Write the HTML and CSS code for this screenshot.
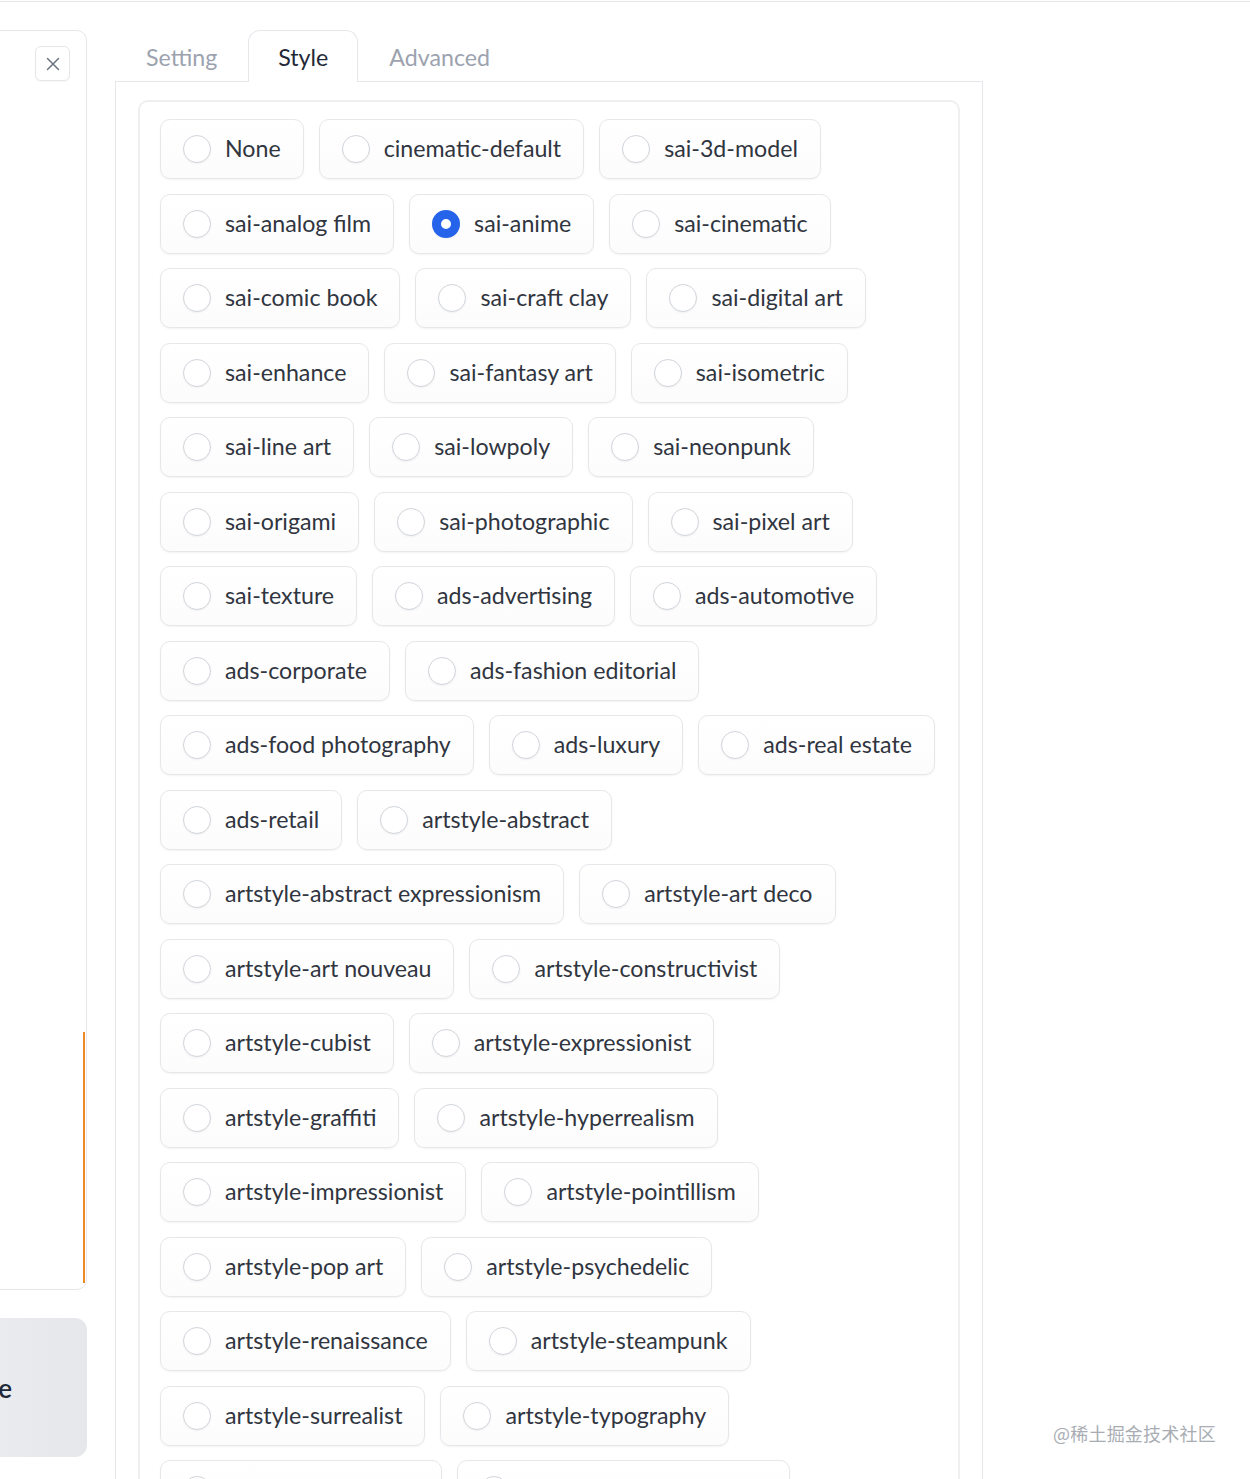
FILE: index.html
```html
<!DOCTYPE html>
<html lang="en">
<head>
<meta charset="utf-8">
<title>Style</title>
<link rel="stylesheet" href="styles.css">
</head>
<body>
<div class="page">
  <div class="left">
    <div class="card">
      <div class="card-head">
        <button class="close" aria-label="close">
          <svg width="14" height="14" viewBox="0 0 14 14"><path d="M1.5 1.5 L12.5 12.5 M12.5 1.5 L1.5 12.5" stroke="#6b7280" stroke-width="1.5" fill="none" stroke-linecap="round"/></svg>
        </button>
      </div>
      <div class="card-fill"></div>
      <div class="card-edge"></div>
    </div>
    <button class="gen">Generate</button>
  </div>

  <div class="tabs">
    <div class="tab-nav">
      <button class="tab">Setting</button>
      <button class="tab selected">Style</button>
      <button class="tab">Advanced</button>
    </div>
    <div class="tab-panel">
      <div class="box">
        <div class="row">
          <label class="item"><span class="radio"></span><span class="txt">None</span></label>
          <label class="item"><span class="radio"></span><span class="txt">cinematic-default</span></label>
          <label class="item"><span class="radio"></span><span class="txt">sai-3d-model</span></label>
        </div>
        <div class="row">
          <label class="item"><span class="radio"></span><span class="txt">sai-analog film</span></label>
          <label class="item"><span class="radio checked"></span><span class="txt">sai-anime</span></label>
          <label class="item"><span class="radio"></span><span class="txt">sai-cinematic</span></label>
        </div>
        <div class="row">
          <label class="item"><span class="radio"></span><span class="txt">sai-comic book</span></label>
          <label class="item"><span class="radio"></span><span class="txt">sai-craft clay</span></label>
          <label class="item"><span class="radio"></span><span class="txt">sai-digital art</span></label>
        </div>
        <div class="row">
          <label class="item"><span class="radio"></span><span class="txt">sai-enhance</span></label>
          <label class="item"><span class="radio"></span><span class="txt">sai-fantasy art</span></label>
          <label class="item"><span class="radio"></span><span class="txt">sai-isometric</span></label>
        </div>
        <div class="row">
          <label class="item"><span class="radio"></span><span class="txt">sai-line art</span></label>
          <label class="item"><span class="radio"></span><span class="txt">sai-lowpoly</span></label>
          <label class="item"><span class="radio"></span><span class="txt">sai-neonpunk</span></label>
        </div>
        <div class="row">
          <label class="item"><span class="radio"></span><span class="txt">sai-origami</span></label>
          <label class="item"><span class="radio"></span><span class="txt">sai-photographic</span></label>
          <label class="item"><span class="radio"></span><span class="txt">sai-pixel art</span></label>
        </div>
        <div class="row">
          <label class="item"><span class="radio"></span><span class="txt">sai-texture</span></label>
          <label class="item"><span class="radio"></span><span class="txt">ads-advertising</span></label>
          <label class="item"><span class="radio"></span><span class="txt">ads-automotive</span></label>
        </div>
        <div class="row">
          <label class="item"><span class="radio"></span><span class="txt">ads-corporate</span></label>
          <label class="item"><span class="radio"></span><span class="txt">ads-fashion editorial</span></label>
        </div>
        <div class="row">
          <label class="item"><span class="radio"></span><span class="txt">ads-food photography</span></label>
          <label class="item"><span class="radio"></span><span class="txt">ads-luxury</span></label>
          <label class="item"><span class="radio"></span><span class="txt">ads-real estate</span></label>
        </div>
        <div class="row">
          <label class="item"><span class="radio"></span><span class="txt">ads-retail</span></label>
          <label class="item"><span class="radio"></span><span class="txt">artstyle-abstract</span></label>
        </div>
        <div class="row">
          <label class="item"><span class="radio"></span><span class="txt">artstyle-abstract expressionism</span></label>
          <label class="item"><span class="radio"></span><span class="txt">artstyle-art deco</span></label>
        </div>
        <div class="row">
          <label class="item"><span class="radio"></span><span class="txt">artstyle-art nouveau</span></label>
          <label class="item"><span class="radio"></span><span class="txt">artstyle-constructivist</span></label>
        </div>
        <div class="row">
          <label class="item"><span class="radio"></span><span class="txt">artstyle-cubist</span></label>
          <label class="item"><span class="radio"></span><span class="txt">artstyle-expressionist</span></label>
        </div>
        <div class="row">
          <label class="item"><span class="radio"></span><span class="txt">artstyle-graffiti</span></label>
          <label class="item"><span class="radio"></span><span class="txt">artstyle-hyperrealism</span></label>
        </div>
        <div class="row">
          <label class="item"><span class="radio"></span><span class="txt">artstyle-impressionist</span></label>
          <label class="item"><span class="radio"></span><span class="txt">artstyle-pointillism</span></label>
        </div>
        <div class="row">
          <label class="item"><span class="radio"></span><span class="txt">artstyle-pop art</span></label>
          <label class="item"><span class="radio"></span><span class="txt">artstyle-psychedelic</span></label>
        </div>
        <div class="row">
          <label class="item"><span class="radio"></span><span class="txt">artstyle-renaissance</span></label>
          <label class="item"><span class="radio"></span><span class="txt">artstyle-steampunk</span></label>
        </div>
        <div class="row">
          <label class="item"><span class="radio"></span><span class="txt">artstyle-surrealist</span></label>
          <label class="item"><span class="radio"></span><span class="txt">artstyle-typography</span></label>
        </div>
        <div class="row">
          <label class="item"><span class="radio"></span><span class="txt">artstyle-watercolor</span></label>
          <label class="item"><span class="radio"></span><span class="txt">futuristic-biomechanical</span></label>
        </div>
      </div>
    </div>
  </div>
</div>
<div class="watermark">@稀土掘金技术社区</div>
</body>
</html>
```

FILE: styles.css
```css
* { box-sizing: border-box; }

html, body {
  margin: 0;
  padding: 0;
  background: #ffffff;
  overflow: hidden;
}

body {
  font-family: "Lato", "Noto Sans", sans-serif;
  color: #1f2937;
  height: 1479px;
  position: relative;
}

.page {
  margin-top: 1px;
  border-top: 1px solid #e5e7eb;
  padding-top: 28px;
  display: flex;
  gap: 28px;
  align-items: flex-start;
}

/* left column */
.left {
  margin-left: -200px;
  width: 287px;
  flex: none;
  display: flex;
  flex-direction: column;
  gap: 28px;
}

.card {
  height: 1260px;
  border: 1px solid #e5e7eb;
  border-radius: 10px;
  background: #fff;
  display: flex;
  flex-direction: column;
}

.card-head {
  display: flex;
  justify-content: flex-end;
  padding: 15px 16px 0 0;
}

.close {
  width: 35px;
  height: 35px;
  border: 1px solid #e5e7eb;
  border-radius: 6px;
  background: #fff;
  box-shadow: 0 1px 2px rgba(0,0,0,0.04);
  display: flex;
  align-items: center;
  justify-content: center;
  padding: 0;
}

.card-fill { flex: 1; }

.card-edge {
  align-self: flex-end;
  width: 2px;
  height: 251px;
  margin: 0 1px 6px 0;
  background: #f08a24;
}

.gen {
  height: 139px;
  border: none;
  border-radius: 12px;
  background: linear-gradient(90deg, #f3f4f6, #e5e7eb);
  font-family: "Lato", "Noto Sans", sans-serif;
  font-size: 26px;
  font-weight: 600;
  color: #1f2937;
  text-align: right;
  padding: 0 75px 0 0;
}

/* tabs */
.tabs {
  width: 868px;
  flex: none;
}

.tab-nav {
  display: flex;
  height: 51px;
  position: relative;
  z-index: 1;
}

.tab {
  border: 1px solid transparent;
  border-bottom: none;
  background: transparent;
  padding: 0 30px;
  font-family: "Lato", "Noto Sans", sans-serif;
  font-size: 23.2px;
  color: #9ca3af;
  height: 52px;
  border-radius: 12px 12px 0 0;
}

.tab.selected {
  color: #1f2937;
  border-color: #e5e7eb;
  background: #fff;
  padding: 0 29px;
}

.tab-panel {
  border: 1px solid #e5e7eb;
  border-bottom: none;
  height: 1420px;
  padding: 18px 22px 0 22px;
}

.box {
  border: 2px solid #eeeff1;
  border-radius: 10px;
  padding: 17px 20px 20px 20px;
  display: flex;
  flex-direction: column;
  gap: 14.5px;
  height: 1500px;
}

.row {
  display: flex;
  gap: 15px;
}

.item {
  height: 60px;
  display: flex;
  align-items: center;
  gap: 14px;
  padding: 0 22px 0 22px;
  border: 1px solid #e5e7eb;
  border-radius: 10px;
  background: linear-gradient(180deg, #ffffff 0%, #fcfcfc 100%);
  box-shadow: 0 1px 2px rgba(0,0,0,0.05);
  font-size: 23.2px;
  color: #374151;
  white-space: nowrap;
}

.radio {
  width: 28px;
  height: 28px;
  border-radius: 50%;
  border: 1px solid #d1d5db;
  background: #fff;
  box-shadow: 0 1px 2px rgba(0,0,0,0.05);
  flex: none;
}

.radio.checked {
  border: 9px solid #2563eb;
}

.txt {
  line-height: 1;
  color: #303540;
}

.watermark {
  position: absolute;
  left: 1053px;
  top: 1420px;
  font-family: "Noto Sans CJK SC", sans-serif;
  font-size: 18px;
  color: #a9adb3;
  letter-spacing: 0.2px;
}
```
